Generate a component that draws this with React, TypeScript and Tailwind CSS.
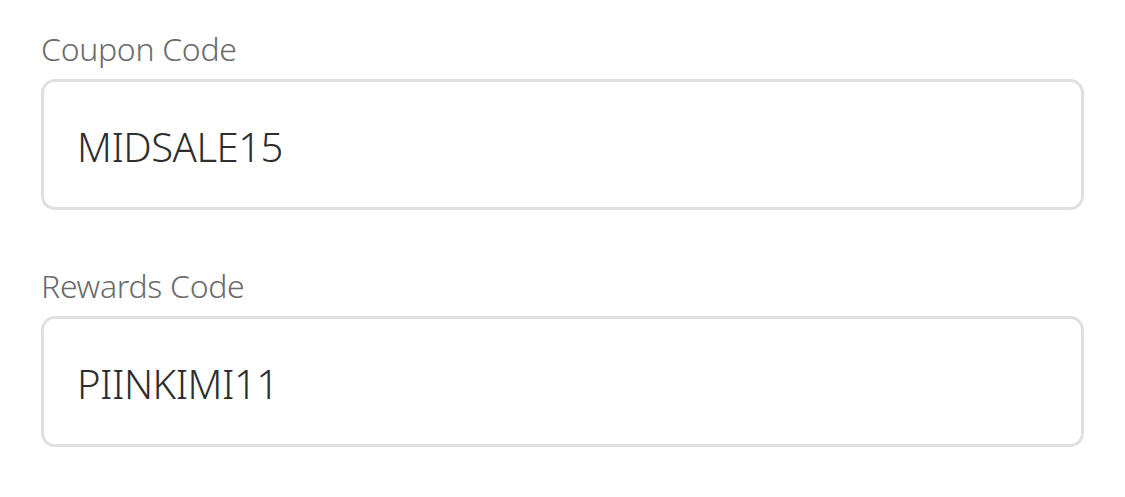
import React from "react";

const fields = [
  { label: "Coupon Code", value: "MIDSALE15" },
  { label: "Rewards Code", value: "PIINKIMI11" },
];

export default function App() {
  return (
    <div
      className="w-[1125px] h-[497px] bg-white px-[41px] pt-[29px] flex flex-col gap-[56px]"
      style={{ fontFamily: '"Noto Sans", "Open Sans", sans-serif' }}
    >
      {fields.map((f) => (
        <div key={f.label} className="flex flex-col">
          <label className="text-[32px] leading-[40px] font-light tracking-[-0.3px] text-[#6b6b6b] mb-[10px]">
            {f.label}
          </label>
          <div className="h-[131px] border-[3px] border-[#e0e0e3] rounded-[14px] flex items-center px-[33px]">
            <span className="mt-[5px] text-[40px] leading-none font-light tracking-[-0.5px] text-[#2e2e2e]">
              {f.value}
            </span>
          </div>
        </div>
      ))}
    </div>
  );
}
